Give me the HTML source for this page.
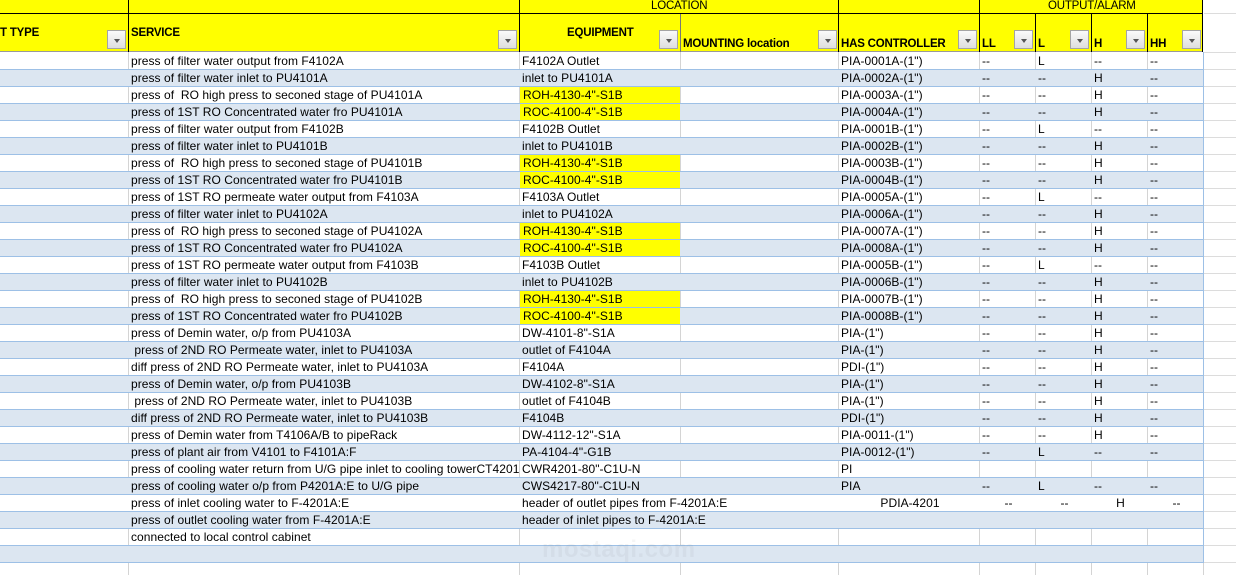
<!DOCTYPE html>
<html><head><meta charset="utf-8"><style>
*{margin:0;padding:0;box-sizing:border-box}
body{width:1236px;height:575px;overflow:hidden;background:#fff;font-family:"Liberation Sans",sans-serif;font-size:12px;color:#000;position:relative}
.vl{position:absolute;top:52px;bottom:0;width:1px;background:#d4d4d4}
.hdr{position:absolute;left:0;top:0;width:1203px;height:52px;background:#ffff00;border-bottom:1px solid #9a9a9a}
.hb{position:absolute;background:#000}
.ht{position:absolute;font-weight:bold;font-size:11.5px;letter-spacing:-0.2px}
.btn{position:absolute;width:19px;height:19px;top:30px;border:1px solid #a4a4a4;background:linear-gradient(#fafafa,#dedede)}
.btn:after{content:"";position:absolute;left:6px;top:8px;border-left:3.5px solid transparent;border-right:3.5px solid transparent;border-top:4px solid #555}
.row{position:absolute;left:0;width:1203px;height:17px;border-bottom:1px solid #9dc0e6;white-space:nowrap}
.b{background:#dce6f1}
.c{position:absolute;top:0;height:16px;line-height:17px;padding-left:3px;overflow:visible;letter-spacing:0.05px}
.s{left:128px;width:391px;overflow:hidden}
.e{left:519px}
.y{background:#ffff00;left:520px;width:160px}
.p{left:838px}
.a1{left:979px}.a2{left:1035px}.a3{left:1091px}.a4{left:1147px}
.rv{position:absolute;left:1203px;top:52px;width:1px;height:511px;background:#9dc0e6}
.wm{position:absolute;left:542px;top:536px;font-size:24px;font-weight:bold;color:rgba(120,120,120,0.07);letter-spacing:0.5px}
</style></head><body>
<div class="vl" style="left:128px"></div>
<div class="vl" style="left:519px"></div>
<div class="vl" style="left:680px"></div>
<div class="vl" style="left:838px"></div>
<div class="vl" style="left:979px"></div>
<div class="vl" style="left:1035px"></div>
<div class="vl" style="left:1091px"></div>
<div class="vl" style="left:1147px"></div>
<div class="vl" style="left:1203px"></div>
<div style="position:absolute;left:1204px;top:53px;width:32px;height:522px;background:repeating-linear-gradient(#fff 0 16px,#dcdcdc 16px 17px)"></div>
<div style="position:absolute;left:1204px;top:0;width:32px;height:53px;background:#fff;border-top:0;border-bottom:1px solid #dcdcdc"><div style="position:absolute;top:13px;left:0;width:32px;height:1px;background:#dcdcdc"></div></div>

<div class="hdr">
<div class="hb" style="left:0;top:13px;width:1203px;height:1px"></div>
<div class="hb" style="left:128px;top:0;width:1px;height:52px"></div>
<div class="hb" style="left:519px;top:0;width:1px;height:52px"></div>
<div class="hb" style="left:680px;top:14px;width:1px;height:38px;background:#777"></div>
<div class="hb" style="left:838px;top:0;width:1px;height:52px"></div>
<div class="hb" style="left:979px;top:0;width:1px;height:52px"></div>
<div class="hb" style="left:1035px;top:14px;width:1px;height:38px"></div>
<div class="hb" style="left:1091px;top:14px;width:1px;height:38px"></div>
<div class="hb" style="left:1147px;top:14px;width:1px;height:38px"></div>
<div class="hb" style="left:1202px;top:0;width:1px;height:52px"></div>
<div class="ht" style="left:651px;top:0;font-weight:normal">LOCATION</div>
<div class="ht" style="left:1048px;top:0;font-weight:normal">OUTPUT/ALARM</div>
<div class="ht" style="left:0;top:27px">T TYPE</div>
<div class="ht" style="left:131px;top:27px">SERVICE</div>
<div class="ht" style="left:567px;top:27px">EQUIPMENT</div>
<div class="ht" style="left:683px;top:38px">MOUNTING location</div>
<div class="ht" style="left:841px;top:38px">HAS CONTROLLER</div>
<div class="ht" style="left:982px;top:38px">LL</div>
<div class="ht" style="left:1038px;top:38px">L</div>
<div class="ht" style="left:1094px;top:38px">H</div>
<div class="ht" style="left:1150px;top:38px">HH</div>
<div class="btn" style="left:107px"></div>
<div class="btn" style="left:498px"></div>
<div class="btn" style="left:659px"></div>
<div class="btn" style="left:818px"></div>
<div class="btn" style="left:958px"></div>
<div class="btn" style="left:1014px"></div>
<div class="btn" style="left:1070px"></div>
<div class="btn" style="left:1126px"></div>
<div class="btn" style="left:1182px"></div>
</div>

<div class="row" style="top:53px"><div class="c s">press of filter water output from F4102A</div><div class="c e">F4102A Outlet</div><div class="c p">PIA-0001A-(1")</div><div class="c a1">--</div><div class="c a2">L</div><div class="c a3">--</div><div class="c a4">--</div></div>
<div class="row b" style="top:70px"><div class="c s">press of filter water inlet to PU4101A</div><div class="c e">inlet to PU4101A</div><div class="c p">PIA-0002A-(1")</div><div class="c a1">--</div><div class="c a2">--</div><div class="c a3">H</div><div class="c a4">--</div></div>
<div class="row" style="top:87px"><div class="c s">press of &nbsp;RO high press to seconed stage of PU4101A</div><div class="c e y">ROH-4130-4"-S1B</div><div class="c p">PIA-0003A-(1")</div><div class="c a1">--</div><div class="c a2">--</div><div class="c a3">H</div><div class="c a4">--</div></div>
<div class="row b" style="top:104px"><div class="c s">press of 1ST RO Concentrated water fro PU4101A</div><div class="c e y">ROC-4100-4"-S1B</div><div class="c p">PIA-0004A-(1")</div><div class="c a1">--</div><div class="c a2">--</div><div class="c a3">H</div><div class="c a4">--</div></div>
<div class="row" style="top:121px"><div class="c s">press of filter water output from F4102B</div><div class="c e">F4102B Outlet</div><div class="c p">PIA-0001B-(1")</div><div class="c a1">--</div><div class="c a2">L</div><div class="c a3">--</div><div class="c a4">--</div></div>
<div class="row b" style="top:138px"><div class="c s">press of filter water inlet to PU4101B</div><div class="c e">inlet to PU4101B</div><div class="c p">PIA-0002B-(1")</div><div class="c a1">--</div><div class="c a2">--</div><div class="c a3">H</div><div class="c a4">--</div></div>
<div class="row" style="top:155px"><div class="c s">press of &nbsp;RO high press to seconed stage of PU4101B</div><div class="c e y">ROH-4130-4"-S1B</div><div class="c p">PIA-0003B-(1")</div><div class="c a1">--</div><div class="c a2">--</div><div class="c a3">H</div><div class="c a4">--</div></div>
<div class="row b" style="top:172px"><div class="c s">press of 1ST RO Concentrated water fro PU4101B</div><div class="c e y">ROC-4100-4"-S1B</div><div class="c p">PIA-0004B-(1")</div><div class="c a1">--</div><div class="c a2">--</div><div class="c a3">H</div><div class="c a4">--</div></div>
<div class="row" style="top:189px"><div class="c s">press of 1ST RO permeate water output from F4103A</div><div class="c e">F4103A Outlet</div><div class="c p">PIA-0005A-(1")</div><div class="c a1">--</div><div class="c a2">L</div><div class="c a3">--</div><div class="c a4">--</div></div>
<div class="row b" style="top:206px"><div class="c s">press of filter water inlet to PU4102A</div><div class="c e">inlet to PU4102A</div><div class="c p">PIA-0006A-(1")</div><div class="c a1">--</div><div class="c a2">--</div><div class="c a3">H</div><div class="c a4">--</div></div>
<div class="row" style="top:223px"><div class="c s">press of &nbsp;RO high press to seconed stage of PU4102A</div><div class="c e y">ROH-4130-4"-S1B</div><div class="c p">PIA-0007A-(1")</div><div class="c a1">--</div><div class="c a2">--</div><div class="c a3">H</div><div class="c a4">--</div></div>
<div class="row b" style="top:240px"><div class="c s">press of 1ST RO Concentrated water fro PU4102A</div><div class="c e y">ROC-4100-4"-S1B</div><div class="c p">PIA-0008A-(1")</div><div class="c a1">--</div><div class="c a2">--</div><div class="c a3">H</div><div class="c a4">--</div></div>
<div class="row" style="top:257px"><div class="c s">press of 1ST RO permeate water output from F4103B</div><div class="c e">F4103B Outlet</div><div class="c p">PIA-0005B-(1")</div><div class="c a1">--</div><div class="c a2">L</div><div class="c a3">--</div><div class="c a4">--</div></div>
<div class="row b" style="top:274px"><div class="c s">press of filter water inlet to PU4102B</div><div class="c e">inlet to PU4102B</div><div class="c p">PIA-0006B-(1")</div><div class="c a1">--</div><div class="c a2">--</div><div class="c a3">H</div><div class="c a4">--</div></div>
<div class="row" style="top:291px"><div class="c s">press of &nbsp;RO high press to seconed stage of PU4102B</div><div class="c e y">ROH-4130-4"-S1B</div><div class="c p">PIA-0007B-(1")</div><div class="c a1">--</div><div class="c a2">--</div><div class="c a3">H</div><div class="c a4">--</div></div>
<div class="row b" style="top:308px"><div class="c s">press of 1ST RO Concentrated water fro PU4102B</div><div class="c e y">ROC-4100-4"-S1B</div><div class="c p">PIA-0008B-(1")</div><div class="c a1">--</div><div class="c a2">--</div><div class="c a3">H</div><div class="c a4">--</div></div>
<div class="row" style="top:325px"><div class="c s">press of Demin water, o/p from PU4103A</div><div class="c e">DW-4101-8"-S1A</div><div class="c p">PIA-(1")</div><div class="c a1">--</div><div class="c a2">--</div><div class="c a3">H</div><div class="c a4">--</div></div>
<div class="row b" style="top:342px"><div class="c s">&nbsp;press of 2ND RO Permeate water, inlet to PU4103A</div><div class="c e">outlet of F4104A</div><div class="c p">PIA-(1")</div><div class="c a1">--</div><div class="c a2">--</div><div class="c a3">H</div><div class="c a4">--</div></div>
<div class="row" style="top:359px"><div class="c s">diff press of 2ND RO Permeate water, inlet to PU4103A</div><div class="c e">F4104A</div><div class="c p">PDI-(1")</div><div class="c a1">--</div><div class="c a2">--</div><div class="c a3">H</div><div class="c a4">--</div></div>
<div class="row b" style="top:376px"><div class="c s">press of Demin water, o/p from PU4103B</div><div class="c e">DW-4102-8"-S1A</div><div class="c p">PIA-(1")</div><div class="c a1">--</div><div class="c a2">--</div><div class="c a3">H</div><div class="c a4">--</div></div>
<div class="row" style="top:393px"><div class="c s">&nbsp;press of 2ND RO Permeate water, inlet to PU4103B</div><div class="c e">outlet of F4104B</div><div class="c p">PIA-(1")</div><div class="c a1">--</div><div class="c a2">--</div><div class="c a3">H</div><div class="c a4">--</div></div>
<div class="row b" style="top:410px"><div class="c s">diff press of 2ND RO Permeate water, inlet to PU4103B</div><div class="c e">F4104B</div><div class="c p">PDI-(1")</div><div class="c a1">--</div><div class="c a2">--</div><div class="c a3">H</div><div class="c a4">--</div></div>
<div class="row" style="top:427px"><div class="c s">press of Demin water from T4106A/B to pipeRack</div><div class="c e">DW-4112-12"-S1A</div><div class="c p">PIA-0011-(1")</div><div class="c a1">--</div><div class="c a2">--</div><div class="c a3">H</div><div class="c a4">--</div></div>
<div class="row b" style="top:444px"><div class="c s">press of plant air from V4101 to F4101A:F</div><div class="c e">PA-4104-4"-G1B</div><div class="c p">PIA-0012-(1")</div><div class="c a1">--</div><div class="c a2">L</div><div class="c a3">--</div><div class="c a4">--</div></div>
<div class="row" style="top:461px"><div class="c s">press of cooling water return from U/G pipe inlet to cooling towerCT4201</div><div class="c e">CWR4201-80"-C1U-N</div><div class="c p">PI</div></div>
<div class="row b" style="top:478px"><div class="c s">press of cooling water o/p from P4201A:E to U/G pipe</div><div class="c e">CWS4217-80"-C1U-N</div><div class="c p">PIA</div><div class="c a1">--</div><div class="c a2">L</div><div class="c a3">--</div><div class="c a4">--</div></div>
<div class="row" style="top:495px;background:#fff"><div style="position:absolute;left:680px;top:0;width:158px;height:16px;background:#fff"></div><div class="c s">press of inlet cooling water to F-4201A:E</div><div class="c e">header of outlet pipes from F-4201A:E</div><div class="c" style="left:838px;width:141px;text-align:center">PDIA-4201</div><div class="c" style="left:979px;width:56px;text-align:center">--</div><div class="c" style="left:1035px;width:56px;text-align:center">--</div><div class="c" style="left:1091px;width:56px;text-align:center">H</div><div class="c" style="left:1147px;width:56px;text-align:center">--</div></div>
<div class="row b" style="top:512px"><div class="c s">press of outlet cooling water from F-4201A:E</div><div class="c e">header of inlet pipes to F-4201A:E</div></div>
<div class="row" style="top:529px"><div class="c s">connected to local control cabinet</div></div>
<div class="row b" style="top:546px"></div>
<div class="rv"></div>
<div class="wm">mostaqi.com</div>
</body></html>
